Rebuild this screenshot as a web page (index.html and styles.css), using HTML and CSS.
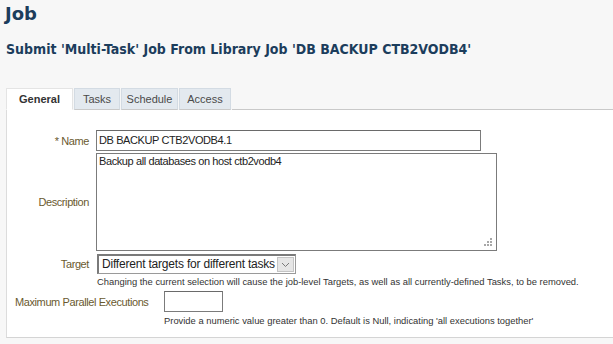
FILE: index.html
```html
<!DOCTYPE html>
<html>
<head>
<meta charset="utf-8">
<link rel="stylesheet" href="styles.css">
</head>
<body>
<h1 class="title">Job</h1>
<h2 class="subtitle">Submit 'Multi-Task' Job From Library Job 'DB BACKUP CTB2VODB4'</h2>
<div class="tabs">
  <div class="tab active t-general">General</div>
  <div class="tab t-tasks">Tasks</div>
  <div class="tab t-schedule">Schedule</div>
  <div class="tab t-access">Access</div>
  <div class="tab-fill"></div>
</div>
<div class="panel">
  <div class="row name-row">
    <div class="label"><span class="req">*</span> Name</div>
    <div class="input name-input">DB BACKUP CTB2VODB4.1</div>
  </div>
  <div class="row desc-row">
    <div class="label">Description</div>
    <div class="textarea">Backup all databases on host ctb2vodb4
      <svg class="grip" width="9" height="9" viewBox="0 0 9 9"><g fill="#a8a8a8"><rect x="6" y="0" width="2" height="2"/><rect x="3" y="3" width="2" height="2"/><rect x="6" y="3" width="2" height="2"/><rect x="0" y="6" width="2" height="2"/><rect x="3" y="6" width="2" height="2"/><rect x="6" y="6" width="2" height="2"/></g></svg>
    </div>
  </div>
  <div class="row target-row">
    <div class="label">Target</div>
    <div class="select"><span class="select-text">Different targets for different tasks</span><span class="select-btn"><svg width="9" height="6" viewBox="0 0 9 6"><path d="M1 1 L4.5 4.5 L8 1" fill="none" stroke="#7a7a7a" stroke-width="1"/></svg></span></div>
  </div>
  <div class="help help-target">Changing the current selection will cause the job-level Targets, as well as all currently-defined Tasks, to be removed.</div>
  <div class="row max-row">
    <div class="label max-label">Maximum Parallel Executions</div>
    <div class="input small-input"></div>
  </div>
  <div class="help help-max">Provide a numeric value greater than 0. Default is Null, indicating 'all executions together'</div>
</div>
</body>
</html>
```
FILE: styles.css
```css
html, body {
  margin: 0;
  padding: 0;
  background: #f7f7f7;
  width: 613px;
  height: 344px;
  overflow: hidden;
  font-family: "Liberation Sans", Arial, sans-serif;
}
.title {
  margin: 0;
  padding: 3px 0 0 5px;
  font-family: "DejaVu Sans", sans-serif;
  font-size: 18px;
  line-height: 22px;
  font-weight: bold;
  color: #1c3d5c;
}
.subtitle {
  margin: 0;
  padding: 15px 0 0 6px;
  font-family: "DejaVu Sans Condensed", "DejaVu Sans", sans-serif;
  font-size: 14px;
  line-height: 18px;
  font-weight: bold;
  color: #1c3d5c;
}
.tabs {
  display: flex;
  margin: 30px 0 0 6px;
  height: 22px;
}
.tab {
  box-sizing: border-box;
  height: 22px;
  font-size: 11px;
  line-height: 21px;
  text-align: center;
  color: #4a4a4a;
  background: #e3e9ef;
  border: 1px solid #d3dbe3;
  border-bottom: 1px solid #c9c9c9;
  margin-right: 1px;
}
.t-general { width: 67px; }
.t-tasks { width: 46px; }
.t-schedule { width: 57px; }
.t-access { width: 52px; }
.tab.active {
  background: #fff;
  border-color: #e4e4e4;
  border-bottom-color: #fff;
  font-weight: bold;
  color: #333;
}
.tab-fill {
  flex: 1;
  border-bottom: 1px solid #c9c9c9;
}
.panel {
  background: #fff;
  margin-left: 6px;
  border-left: 1px solid #dcdcdc;
  border-bottom: 1px solid #d4d4d4;
  height: 228px;
  box-sizing: border-box;
  padding-top: 20px;
  font-size: 11px;
  letter-spacing: -0.4px;
}
.row {
  display: flex;
  align-items: center;
}
.label {
  width: 82px;
  text-align: right;
  color: #6a5a2f;
  padding-right: 7px;
  flex-shrink: 0;
}
.req { color: #6a5a2f; }
.input {
  box-sizing: border-box;
  height: 21px;
  border: 1px solid #7b7b7b;
  border-top-color: #6a6a6a;
  background: #fff;
  color: #222;
  padding: 0 2px;
  line-height: 19px;
}
.name-input { width: 385px; }
.desc-row { margin-top: 2px; }
.textarea {
  position: relative;
  box-sizing: border-box;
  width: 401px;
  height: 98px;
  border: 1px solid #7b7b7b;
  padding: 1px 2px;
  color: #222;
  align-self: flex-start;
}
.grip {
  position: absolute;
  right: 3px;
  bottom: 3px;
}
.target-row { margin-top: 3px; }
.select {
  display: flex;
  box-sizing: border-box;
  width: 199px;
  height: 20px;
  margin-left: 1px;
  border: 1px solid #9a9a9a;
  border-top: 2px solid #7a7a7a;
  border-left: 2px solid #7a7a7a;
  background: #fff;
  color: #222;
}
.select-text {
  flex: 1;
  padding-left: 3px;
  line-height: 17px;
  font-size: 12px;
  letter-spacing: -0.2px;
  white-space: nowrap;
}
.select-btn {
  width: 17px;
  margin: 1px;
  background: #e6e6e6;
  border: 1px solid #c4c4c4;
  box-sizing: border-box;
  display: flex;
  align-items: center;
  justify-content: center;
}
.help {
  font-size: 9.4px;
  letter-spacing: 0;
  color: #333;
  line-height: 12px;
  white-space: nowrap;
}
.help-target {
  padding-left: 90px;
  margin-top: 2px;
}
.max-row { margin-top: 3px; }
.max-label {
  width: auto;
  padding-left: 8px;
  padding-right: 16px;
  text-align: left;
}
.small-input { width: 59px; height: 21px; }
.help-max {
  padding-left: 157px;
  margin-top: 3px;
}
```
